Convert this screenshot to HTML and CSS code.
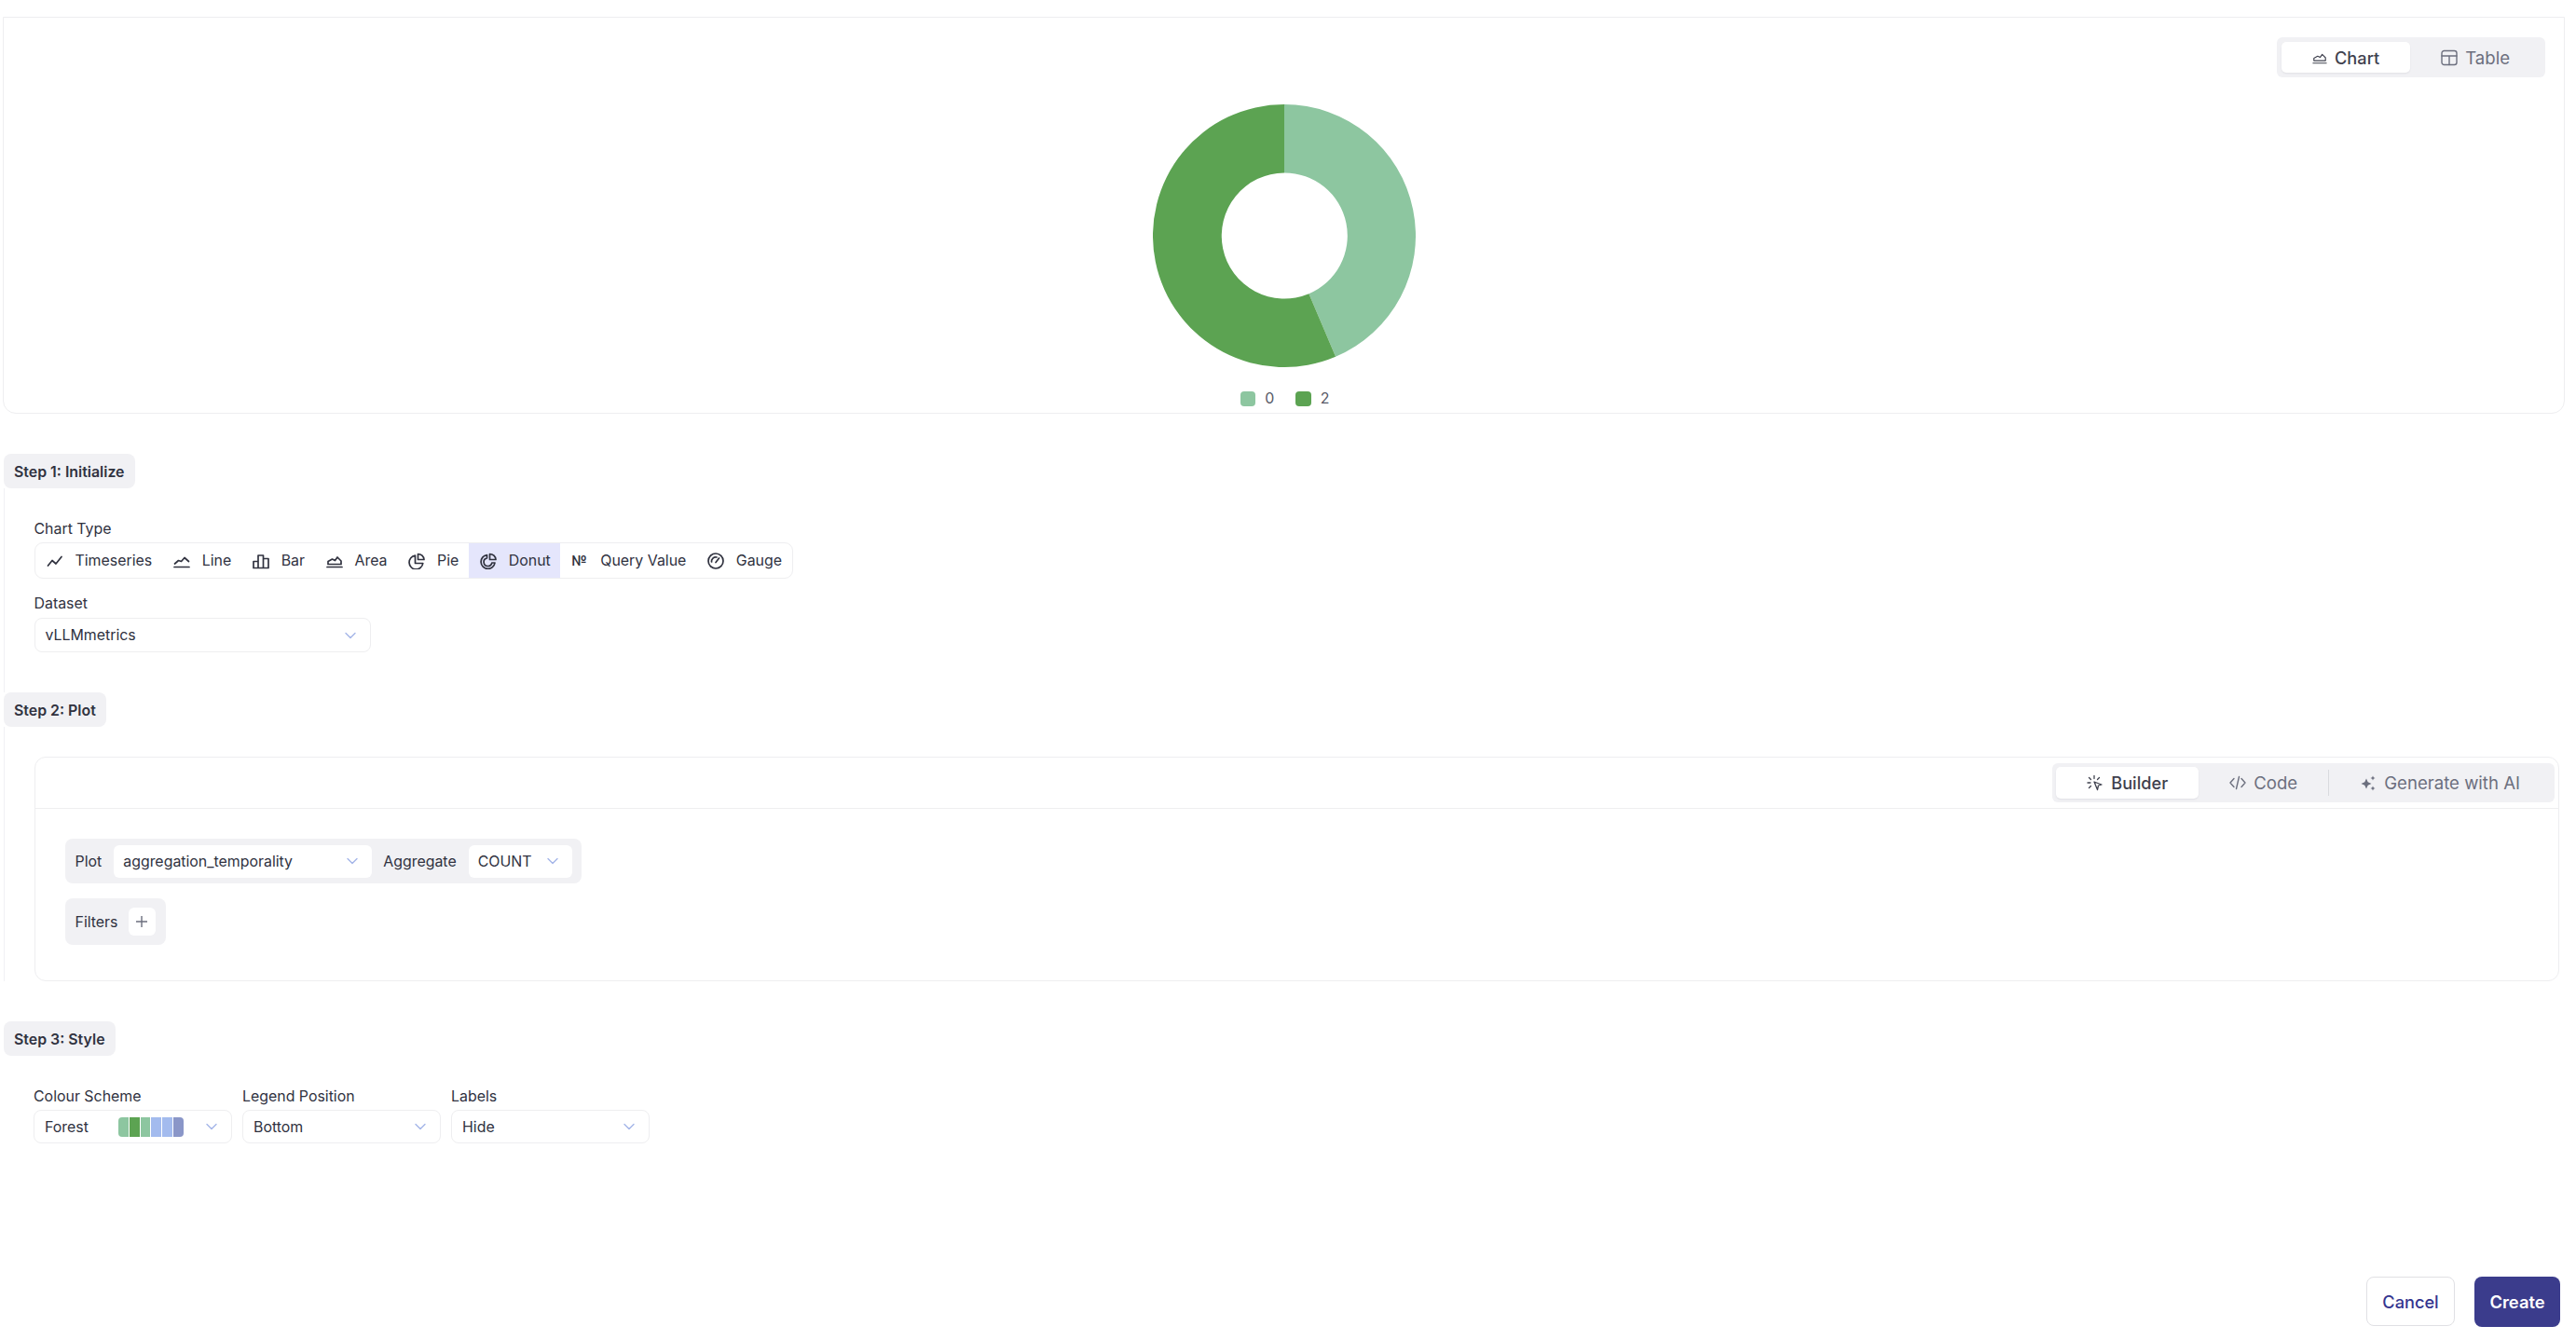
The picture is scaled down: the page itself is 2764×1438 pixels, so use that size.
FILE: index.html
```html
<!DOCTYPE html>
<html lang="en">
<head>
<meta charset="utf-8">
<title>Create chart</title>
<link rel="stylesheet" href="styles.css">
</head>
<body>
<main class="page">
  <section class="chart-card">
    <div class="toggle toggle-top">
      <button class="tab tab-on"><svg class="ico ico-s" viewBox="0 0 18 18"><path d="M1 15.5h16M2 12.5v-3l4.500-2.500 3 1.500 2.500-3.500 4 4v3.500z"/></svg>Chart</button>
      <button class="tab"><svg class="ico" viewBox="0 0 18 18"><rect x="1" y="1.500" width="16" height="15" rx="2.500"/><path d="M1 7h16M9 7v9.500"/></svg>Table</button>
    </div>
    <svg class="donut" viewBox="0 0 284 284">
      <path class="slice-a" d="M142 0A142 142 0 0 1 197.500 272.700L168.600 204.700A68 68 0 0 0 142 74Z"/>
      <path class="slice-b" d="M142 0A142 142 0 1 0 197.500 272.700L168.600 204.700A68 68 0 1 1 142 74Z"/>
    </svg>
    <div class="legend">
      <span class="key"><i class="dot dot-a"></i>0</span>
      <span class="key"><i class="dot dot-b"></i>2</span>
    </div>
  </section>

  <h2 class="chip chip-1">Step 1: Initialize</h2>
  <div class="body ruled pad-1">
    <div class="label">Chart Type</div>
    <div class="seg">
      <div class="seg-item"><svg class="ico ico-d" viewBox="0 0 18 18"><path d="M1.500 14l4.500-5.500 4 3.500 6-7.500"/></svg>Timeseries</div>
      <div class="seg-item"><svg class="ico ico-d" viewBox="0 0 18 18"><path d="M1 15.500h16M1.500 12l4-3.500 3 1 3.500-4 4.500 4"/></svg>Line</div>
      <div class="seg-item"><svg class="ico ico-d" viewBox="0 0 18 18"><path d="M1 9.500h5v7H1zM6 3h5.500v13.500H6zM11.500 6.500H17v10h-5.500z"/></svg>Bar</div>
      <div class="seg-item"><svg class="ico ico-d" viewBox="0 0 18 18"><path d="M1 15.500h16M2 12.500v-3l4.500-2.500 3 1.500 2.500-3.500 4 4v3.500z"/></svg>Area</div>
      <div class="seg-item"><svg class="ico ico-d" viewBox="0 0 18 18"><path d="M7.500 3.200A7.400 7.400 0 1 0 15.800 11.500H7.500z"/><path d="M10.500 1.500v6h6.500a6.500 6.500 0 0 0-6.500-6z"/></svg>Pie</div>
      <div class="seg-item seg-on"><svg class="ico ico-d" viewBox="0 0 18 18"><path d="M7.500 2.500a7.500 7.500 0 1 0 8.500 8.500h-3.200a4.400 4.400 0 1 1-5.300-5.200z"/><path d="M10.500 1.500v6h6.500a6.500 6.500 0 0 0-6.500-6z"/></svg>Donut</div>
      <div class="seg-item"><span class="numero">№</span>Query Value</div>
      <div class="seg-item"><svg class="ico ico-d" viewBox="0 0 18 18"><circle cx="9" cy="9" r="8"/><path d="M4.500 10a4.500 4.500 0 0 1 5.500-5M9 10.500l3.500-4.500"/></svg>Gauge</div>
    </div>
    <div class="label label-next">Dataset</div>
    <div class="select sel-dataset">vLLMmetrics<svg class="chev" viewBox="0 0 12 8"><path d="M1 1.500l5 5 5-5"/></svg></div>
  </div>

  <h2 class="chip">Step 2: Plot</h2>
  <div class="body ruled pad-2">
    <div class="builder">
      <div class="builder-head">
        <div class="toggle toggle-builder">
          <button class="tab tab-on"><svg class="ico ico-s" viewBox="0 0 18 18"><path d="M8 1.500v3M2.500 3.500l2 2M1 9h3M2.500 14.500l2-2M13.500 3.500l-2 2M8 8l8 3-3.500 1-1 4.500z"/></svg>Builder</button>
          <button class="tab"><svg class="ico" viewBox="0 0 18 18"><path d="M5 4.500L1 9l4 4.500M13 4.500L17 9l-4 4.500M10.500 2.500l-3 13"/></svg>Code</button>
          <span class="tab-sep"></span>
          <button class="tab"><svg class="ico ico-fill" viewBox="0 0 18 18"><path d="M7 4.500l1.700 3.800 3.800 1.700-3.800 1.700L7 15.500l-1.700-3.800L1.500 10l3.800-1.700zM14 1.500l.8 1.700 1.700.8-1.700.8-.8 1.700-.8-1.700-1.700-.8 1.700-.8zM14 12.500l.8 1.700 1.700.8-1.700.8-.8 1.700-.8-1.700-1.700-.8 1.700-.8z"/></svg>Generate with AI</button>
        </div>
      </div>
      <div class="builder-main">
        <div class="well well-plot">
          <span class="well-text">Plot</span>
          <div class="pick pick-field">aggregation_temporality<svg class="chev" viewBox="0 0 12 8"><path d="M1 1.500l5 5 5-5"/></svg></div>
          <span class="well-text well-gap">Aggregate</span>
          <div class="pick pick-agg">COUNT<svg class="chev" viewBox="0 0 12 8"><path d="M1 1.500l5 5 5-5"/></svg></div>
        </div>
        <div class="well well-filter">
          <span class="well-text">Filters</span>
          <button class="plus"><svg class="ico-plus" viewBox="0 0 14 14"><path d="M7 1v12M1 7h12"/></svg></button>
        </div>
      </div>
    </div>
  </div>

  <h2 class="chip">Step 3: Style</h2>
  <div class="body pad-3">
    <div class="fields">
      <div class="field">
        <div class="label">Colour Scheme</div>
        <div class="select sel-style sel-scheme">
          <span class="scheme-name">Forest</span>
          <span class="swatches"><i class="sw sw1"></i><i class="sw sw2"></i><i class="sw sw3"></i><i class="sw sw4"></i><i class="sw sw5"></i><i class="sw sw6"></i></span>
          <svg class="chev" viewBox="0 0 12 8"><path d="M1 1.500l5 5 5-5"/></svg>
        </div>
      </div>
      <div class="field">
        <div class="label">Legend Position</div>
        <div class="select sel-style">Bottom<svg class="chev" viewBox="0 0 12 8"><path d="M1 1.500l5 5 5-5"/></svg></div>
      </div>
      <div class="field">
        <div class="label">Labels</div>
        <div class="select sel-style">Hide<svg class="chev" viewBox="0 0 12 8"><path d="M1 1.500l5 5 5-5"/></svg></div>
      </div>
    </div>
  </div>

  <footer class="actions">
    <button class="btn btn-cancel">Cancel</button>
    <button class="btn btn-create">Create</button>
  </footer>
</main>
</body>
</html>
```
FILE: styles.css
```css
* { box-sizing: border-box; }
html, body { margin: 0; background: #fff; }
body { font-family: Inter, "Liberation Sans", sans-serif; color: #30323f; font-size: 15.9px; }
button { font: inherit; border: 0; background: none; padding: 0; color: inherit; }
.page { padding: 18px 12px 0 3px; }

.chart-card { position: relative; height: 426px; border: 1.5px solid #eeeef0; border-radius: 0 0 14px 14px; padding: 93px 0 0; }
.toggle { display: flex; align-items: stretch; background: #f1f1f4; border-radius: 6px; }
.toggle-top { position: absolute; top: 21px; right: 20px; height: 43px; padding: 5px; }
.toggle-builder { height: 42px; padding: 4px; }
.tab { display: flex; align-items: center; gap: 8px; padding: 0 33px; font-size: 18.6px; font-weight: 400; color: #6c6f7e; border-radius: 5px; }
.tab-on { background: #fff; color: #3f414e; font-size: 18.2px; font-weight: 500; box-shadow: 0 1px 2px rgba(40, 40, 60, .08); }
.tab-sep { width: 1px; margin: 3px 0; background: #d9dade; }
.ico { width: 18px; height: 18px; flex: none; fill: none; stroke: currentColor; stroke-width: 1.400; stroke-linecap: round; stroke-linejoin: round; }
.ico-s { stroke-width: 1.300; }
.toggle-top .ico-s { width: 16px; height: 16px; }
.ico-d { stroke-width: 1.700; }
.ico-fill { fill: currentColor; stroke: none; }
.donut { display: block; width: 282px; height: 282px; margin: 0 auto; }
.slice-a { fill: #8dc6a0; }
.slice-b { fill: #5ca352; }
.legend { display: flex; justify-content: center; gap: 23px; margin: 26px 0 0 2px; font-size: 15.9px; color: #565866; line-height: 16px; }
.key { display: flex; align-items: center; gap: 10px; }
.dot { width: 16.500px; height: 16px; border-radius: 4px; }
.dot-a { background: #8dc6a0; }
.dot-b { background: #5ca352; }

.chip { display: block; width: max-content; margin: 0 0 0 1px; padding: 0 11px; height: 37px; line-height: 39px; background: #f1f1f4; border-radius: 8px; font-size: 15.9px; font-weight: 600; color: #30323f; }
.chip-1 { margin-top: 43px; }
.body { margin: 0 6px 0 1px; }
.ruled { border-left: 1.500px solid #f1f1f4; }
.pad-1 { padding: 33px 0 43px 31.500px; }
.pad-2 { padding: 32px 0 0 31.500px; margin-bottom: 43px; }
.pad-3 { padding: 33px 0 0 32px; }

.label { height: 20px; line-height: 22px; }
.label-next { margin-top: 16px; }
.seg { display: flex; width: max-content; height: 39px; margin-top: 5px; border: 1.500px solid #eeeef0; border-radius: 9px; overflow: hidden; }
.seg-item { display: flex; align-items: center; gap: 13px; padding: 0 10.500px 0 12px; }
.seg-on { background: #e5e6fc; }
.numero { width: 18px; font-weight: 600; font-size: 15px; }
.select { display: flex; align-items: center; justify-content: space-between; height: 37px; margin-top: 6px; padding: 0 15px 0 11px; border: 1.500px solid #eeeef0; border-radius: 8px; }
.sel-dataset { width: 361px; }
.chev { width: 12px; height: 8px; flex: none; fill: none; stroke: #a4b5e8; stroke-width: 1.400; stroke-linecap: round; stroke-linejoin: round; }

.builder { height: 241px; border: 1.500px solid #eeeef0; border-radius: 12px; }
.builder-head { display: flex; justify-content: flex-end; height: 55px; padding: 6px 4px 0 0; border-bottom: 1.500px solid #eeeef0; }
.builder-main { display: flex; flex-direction: column; align-items: flex-start; gap: 16px; padding: 32px 0 0 32px; }
.well { display: flex; align-items: center; background: #f1f1f4; border-radius: 8px; padding: 0 11px; }
.well-plot { height: 48px; padding-right: 10px; }
.well-filter { height: 50px; }
.well-text { margin-right: 13px; }
.well-filter .well-text { margin-right: 11px; }
.well-gap { margin-left: 12px; }
.pick { display: flex; align-items: center; justify-content: space-between; height: 35px; padding: 0 15px 0 10px; background: #fff; border-radius: 6px; }
.pick-field { width: 277px; }
.pick-agg { width: 111px; }
.plus { display: flex; align-items: center; justify-content: center; width: 29px; height: 30px; background: #fff; border-radius: 6px; }
.ico-plus { width: 14px; height: 14px; fill: none; stroke: #6c6f7e; stroke-width: 1.400; }

.fields { display: flex; gap: 11px; }
.field { width: 213px; }
.sel-style { height: 36px; margin-top: 5px; }
.sel-scheme { justify-content: flex-start; }
.sel-scheme .chev { margin-left: auto; }
.scheme-name { width: 79px; }
.swatches { display: flex; gap: 1px; width: 70px; height: 21px; border-radius: 4px; overflow: hidden; }
.sw { flex: 1; }
.sw1, .sw3 { background: #8dc6a0; }
.sw2 { background: #5ca352; }
.sw4, .sw5 { background: #a3bbee; }
.sw6 { background: #8a96c8; }

.actions { display: flex; justify-content: flex-end; align-items: flex-start; gap: 21px; margin-top: 143px; padding-right: 5px; }
.btn { height: 53px; font-weight: 500; border-radius: 8px; }
.btn-cancel { width: 95px; font-size: 18.200px; color: #34358f; border: 1.500px solid #e0e0e4; }
.btn-create { width: 92px; height: 54px; font-size: 18.400px; color: #fff; background: #3b3c8c; font-weight: 600; }
```
